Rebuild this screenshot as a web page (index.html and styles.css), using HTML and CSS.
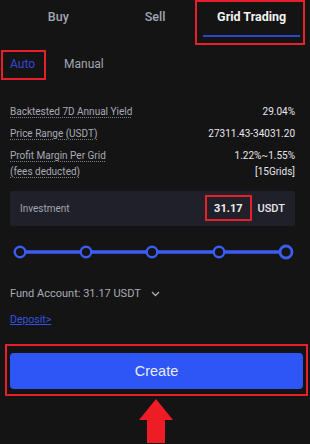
FILE: index.html
```html
<!DOCTYPE html>
<html>
<head>
<meta charset="utf-8">
<link rel="stylesheet" href="styles.css">
</head>
<body>
<div class="page">
  <nav class="tabs">
    <div class="tab">Buy</div>
    <div class="tab">Sell</div>
    <div class="tab active marked">Grid Trading</div>
  </nav>

  <div class="modes">
    <span class="mode active marked">Auto</span>
    <span class="mode">Manual</span>
  </div>

  <div class="stats">
    <div class="row">
      <span class="label">Backtested 7D Annual Yield</span>
      <span class="value">29.04%</span>
    </div>
    <div class="row">
      <span class="label">Price Range (USDT)</span>
      <span class="value">27311.43-34031.20</span>
    </div>
    <div class="row">
      <span class="label">Profit Margin Per Grid<br>(fees deducted)</span>
      <span class="value">1.22%~1.55%<br>[15Grids]</span>
    </div>
  </div>

  <div class="investment">
    <span class="inv-label">Investment</span>
    <span class="inv-amount marked">31.17</span>
    <span class="inv-unit">USDT</span>
  </div>

  <div class="slider">
    <svg width="290" height="16" viewBox="0 0 290 16">
      <line x1="10" y1="8" x2="276" y2="8" stroke="#3c5cf2" stroke-width="3.5"/>
      <circle cx="10" cy="8" r="5.3" fill="#141414" stroke="#3c5cf2" stroke-width="2.4"/>
      <circle cx="76" cy="8" r="5.3" fill="#141414" stroke="#3c5cf2" stroke-width="2.4"/>
      <circle cx="142" cy="8" r="5.3" fill="#141414" stroke="#3c5cf2" stroke-width="2.4"/>
      <circle cx="209" cy="8" r="5.3" fill="#141414" stroke="#3c5cf2" stroke-width="2.4"/>
      <circle cx="276" cy="8" r="6" fill="#141414" stroke="#3c5cf2" stroke-width="2.8"/>
    </svg>
  </div>

  <div class="fund">
    <span>Fund Account: 31.17 USDT</span>
    <svg class="chev" width="9" height="6" viewBox="0 0 9 6"><path d="M1 1 L4.5 4.5 L8 1" fill="none" stroke="#a9abb5" stroke-width="1.3"/></svg>
  </div>

  <div class="deposit">Deposit&gt;</div>

  <div class="create-wrap">
    <button class="create">Create</button>
  </div>

  <div class="arrow">
    <svg width="34" height="44" viewBox="0 0 34 44">
      <polygon points="17,0 34,21 26,21 26,44 8,44 8,21 0,21" fill="#ee1c25"/>
    </svg>
  </div>
</div>
</body>
</html>
```
FILE: styles.css
```css
* { box-sizing: border-box; }
html, body {
  margin: 0;
  padding: 0;
  background: #141414;
}
body {
  font-family: Roboto, "Noto Sans", sans-serif;
  color: #e4e4e8;
  width: 310px;
  height: 444px;
  overflow: hidden;
}
.page {
  display: flex;
  flex-direction: column;
}
.tabs {
  display: flex;
  padding: 0 10px;
  height: 38px;
}
.tab {
  flex: 1;
  text-align: center;
  font-size: 12.5px;
  font-weight: 500;
  color: #a4a6b2;
  line-height: 33px;
  border-bottom: 2px solid transparent;
  position: relative;
}
.tab.active {
  color: #f2f2f2;
  font-weight: 700;
  border-bottom-color: #2b47c8;
  margin-bottom: 1px;
}
.marked::after {
  content: "";
  position: absolute;
  border: 2px solid #e8202a;
  pointer-events: none;
}
.tab.marked::after {
  top: 0;
  bottom: -10px;
  left: -8px;
  right: -5px;
}
.modes {
  display: flex;
  gap: 29px;
  padding: 0 10px;
  margin-top: 11px;
  height: 30px;
  align-items: center;
}
.mode {
  font-size: 12px;
  color: #a4a6b2;
  position: relative;
  line-height: 30px;
}
.mode.active {
  color: #3448d6;
}
.mode.marked::after {
  top: 1px;
  bottom: -1px;
  left: -9px;
  right: -11px;
}
.stats {
  margin-top: 25px;
  padding: 0 15px 0 10px;
  display: flex;
  flex-direction: column;
  gap: 6px;
}
.row {
  display: flex;
  justify-content: space-between;
  font-size: 10px;
  line-height: 16px;
}
.label {
  color: #a9abb5;
  text-decoration: underline dotted #7b7d88;
  text-underline-offset: 2px;
}
.value {
  color: #e6e6ea;
  text-align: right;
}
.investment {
  margin: 11px 15px 0 10px;
  height: 35px;
  background: #1f2029;
  border-radius: 2px;
  display: flex;
  align-items: center;
  padding: 0 10px;
}
.inv-label {
  flex: 1;
  font-size: 10px;
  color: #a4a6b2;
}
.inv-amount {
  position: relative;
  font-size: 11px;
  font-weight: 700;
  color: #f0f0f0;
}
.inv-amount.marked::after {
  top: -7px;
  bottom: -6px;
  left: -9px;
  right: -9px;
}
.inv-unit {
  margin-left: 15px;
  font-size: 11px;
  font-weight: 500;
  color: #e8e8ea;
}
.slider {
  margin-top: 18px;
  padding-left: 10px;
  height: 16px;
  display: flex;
}
.fund {
  margin-top: 26px;
  padding-left: 10px;
  font-size: 11px;
  line-height: 16px;
  color: #a9abb5;
  display: flex;
  align-items: center;
  gap: 10px;
}
.chev { display: block; }
.deposit {
  margin-top: 10px;
  padding-left: 10px;
  font-size: 10.5px;
  line-height: 16px;
  color: #3550e0;
  text-decoration: underline;
}
.create-wrap {
  margin: 16px 2px 0 5px;
  height: 52px;
  border: 2px solid #e8202a;
  padding: 7px 3px 0 3px;
}
.create {
  display: block;
  width: 100%;
  height: 36px;
  border: none;
  border-radius: 4px;
  background: #2e55f6;
  color: #e8ecff;
  font-family: "Liberation Sans", Arial, sans-serif;
  font-size: 14.5px;
  padding: 0;
}
.arrow {
  margin-top: 3px;
  display: flex;
  justify-content: center;
  padding-left: 2px;
}
.arrow svg { display: block; }
```
